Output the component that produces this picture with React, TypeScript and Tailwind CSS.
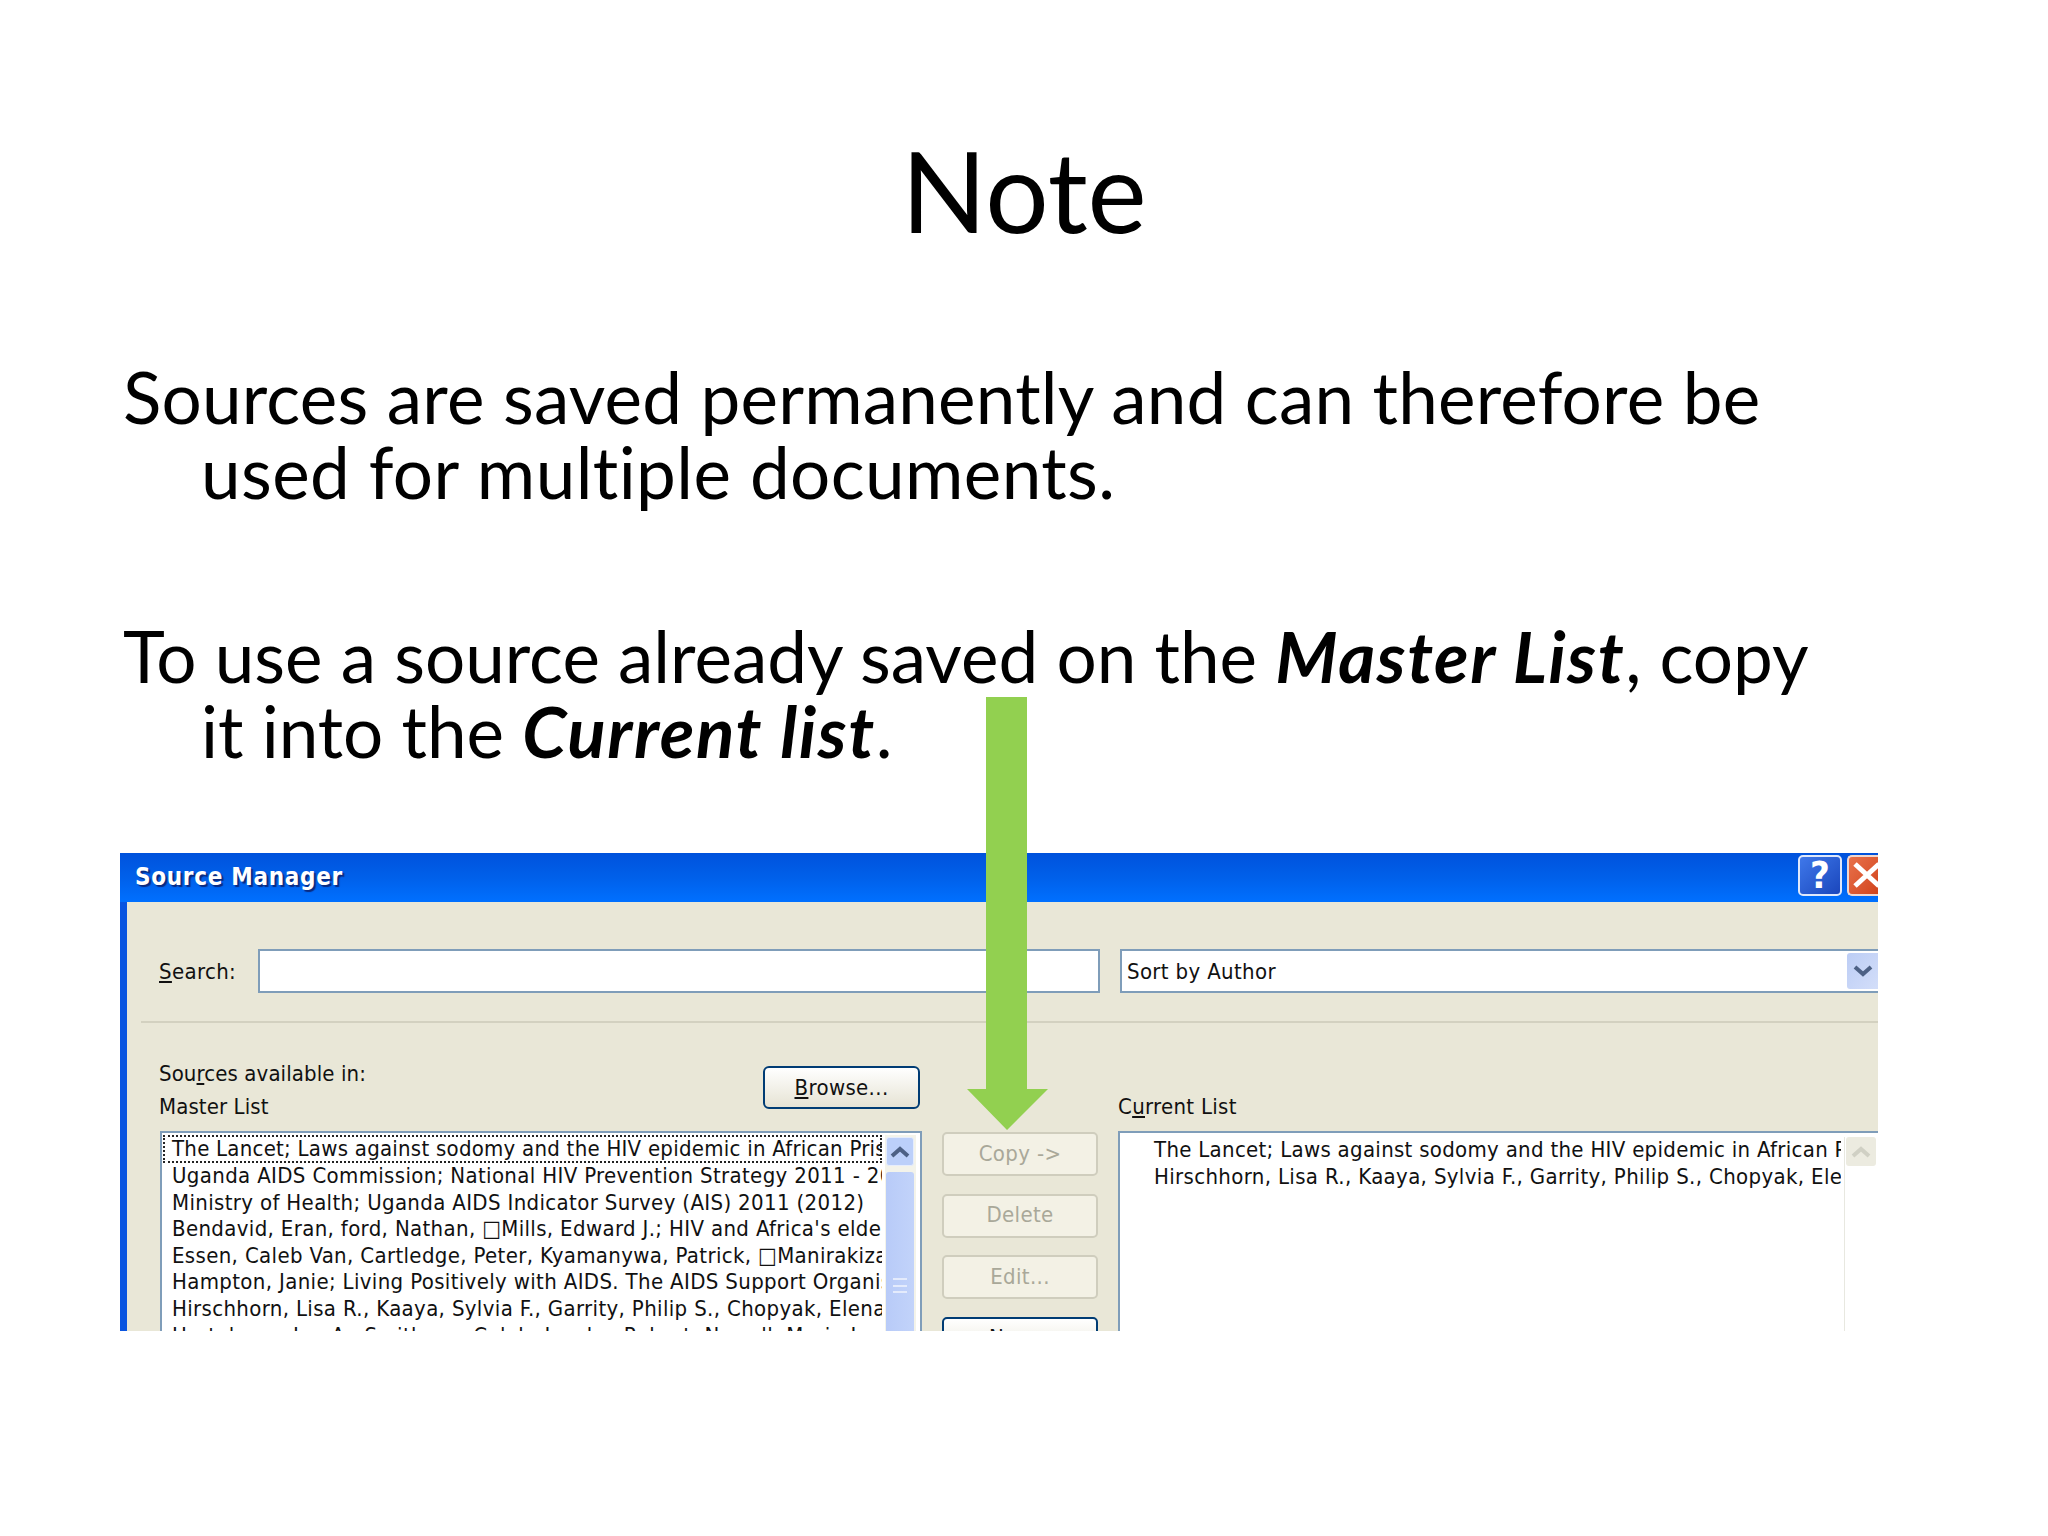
import React from 'react';

const tahoma = "[font-family:'DejaVu_Sans_Condensed','DejaVu_Sans',sans-serif] [font-stretch:condensed]";

const masterRows = [
  'Uganda AIDS Commission; National HIV Prevention Strategy 2011 - 2015',
  'Ministry of Health; Uganda AIDS Indicator Survey (AIS) 2011 (2012)',
  "Bendavid, Eran, ford, Nathan, \u25A1Mills, Edward J.; HIV and Africa's elderly",
  'Essen, Caleb Van, Cartledge, Peter, Kyamanywa, Patrick, \u25A1Manirakiza',
  'Hampton, Janie; Living Positively with AIDS. The AIDS Support Organisation',
  'Hirschhorn, Lisa R., Kaaya, Sylvia F., Garrity, Philip S., Chopyak, Elena',
  'Hartelman, Jan A., Smithson, Caleb, Jacobs, Robert, Newell, Marie-Louise',
];

const Chevron: React.FC<{ up?: boolean; color: string }> = ({ up, color }) => (
  <svg width="20" height="14" viewBox="0 0 20 14">
    <path d={up ? 'M2 11 L10 4 L18 11' : 'M2 3 L10 10 L18 3'} fill="none" stroke={color} strokeWidth="4" />
  </svg>
);

const SideButton: React.FC<{ label: string }> = ({ label }) => (
  <div className="h-[44px] rounded-[5px] border-2 border-[#cfcdbd] bg-[#f3f1e5] flex items-center justify-center text-[22px] text-[#a9a899]">
    {label}
  </div>
);

export default function App() {
  return (
    <div className="relative w-[2048px] h-[1536px] overflow-hidden bg-white text-black [font-family:Lato,sans-serif]">
      <h1 className="pt-[128px] h-[360px] text-center text-[112px] leading-[124px] font-normal">Note</h1>

      <div className="pl-[123px] w-[1900px] text-[71px] leading-[74.5px]">
        <p className="pl-[78px] -indent-[78px] tracking-[0.2px]">
          Sources are saved permanently and can therefore be<br /><span className="tracking-[0.4px]">used for multiple documents.</span>
        </p>
        <p className="mt-[110px] pl-[78px] -indent-[78px]">
          To use a source already saved on the <b className="italic tracking-[1.6px]">Master List</b>, copy<br />it into the <b className="italic tracking-[1.6px]">Current list</b>.
        </p>
      </div>

      {/* dialog screenshot, cut off at the bottom and right */}
      <div className={`absolute left-[120px] top-[853px] w-[1758px] h-[478px] overflow-hidden bg-[#e9e7d7] text-[22px] leading-[26.6px] tracking-[0.35px] text-[#111] ${tahoma}`}>
        <div className="h-[49px] flex items-center pl-[15px] pr-0 bg-gradient-to-b from-[#0052dc] via-[#0060ea] to-[#0070ff]">
          <span className="flex-1 font-bold text-[24px] tracking-[0.7px] text-white [text-shadow:2px_2px_1px_#0a2a80]">Source Manager</span>
          <div className="w-[44px] h-[41px] mb-[5px] rounded-[5px] border-2 border-[#dfe8fb] bg-gradient-to-br from-[#3f78ea] to-[#1b46bc] flex items-center justify-center text-white font-bold text-[38px]">?</div>
          <div className="ml-[5px] w-[31px] h-[41px] mb-[5px] rounded-l-[5px] border-2 border-r-0 border-[#f0d8d0] bg-gradient-to-br from-[#e8714a] to-[#d2431a] overflow-hidden flex items-center">
            <svg width="34" height="30" viewBox="0 0 34 30" className="shrink-0 ml-[2px]">
              <path d="M4 4 L28 26 M28 4 L4 26" stroke="#fff" strokeWidth="5" />
            </svg>
          </div>
        </div>

        <div className="border-l-[7px] border-[#0a55e0] h-full pl-[32px]">
          <div className="pt-[47px] flex items-center">
            <span className="w-[99px] pt-[2px]">
              <u>S</u>earch:
            </span>
            <div className="w-[842px] h-[44px] border-2 border-[#7f9db9] bg-white" />
            <div className="ml-[20px] flex-1 h-[44px] border-2 border-r-0 border-[#7f9db9] bg-white flex items-center pl-[5px]">
              <span className="flex-1 pt-[2px]">Sort by Author</span>
              <div className="w-[31px] h-[36px] rounded-l-[3px] bg-gradient-to-br from-[#bccdf5] to-[#d3def9] flex items-center justify-center">
                <Chevron color="#4d6185" />
              </div>
            </div>
          </div>

          <div className="mt-[28px] ml-[-18px] h-[2px] bg-[#d3d1c0]" />

          <div className="mt-[43px] flex">
            <div className="w-[763px]">
              <div className="flex justify-between pr-[2px]">
                <div className="-mt-[5px] h-[55px] tracking-[0.1px]">
                  <div className="h-[33px]">
                    Sou<u>r</u>ces available in:
                  </div>
                  <div>Master List</div>
                </div>
                <div className="w-[157px] h-[43px] rounded-[6px] border-2 border-[#003c74] bg-gradient-to-b from-white to-[#e6e3d4] flex items-center justify-center">
                  <span className="pt-[2px]">
                    <u>B</u>rowse...
                  </span>
                </div>
              </div>

              <div className="mt-[15px] ml-[1px] h-[210px] border-2 border-[#7f9db9] bg-white flex pl-[1px] pr-[3px] pt-[2px]">
                <div className="w-[719px] overflow-hidden whitespace-nowrap">
                  <div className="h-[28px] border-2 border-dotted border-[#222] pl-[7px] flex items-center tracking-[0.25px]">
                    The Lancet; Laws against sodomy and the HIV epidemic in African Prisons
                  </div>
                  {masterRows.map(row => (
                    <div key={row} className="pl-[9px]">
                      {row}
                    </div>
                  ))}
                </div>
                <div className="ml-[3px] w-[31px] bg-[#f3f3ea] pl-[1px] pr-[2px] pt-[2px]">
                  <div className="h-[29px] rounded-[3px] bg-[#bcd0fa] flex items-center justify-center border border-[#e6edfc]">
                    <Chevron up color="#4d6185" />
                  </div>
                  <div className="mt-[6px] h-[180px] rounded-[3px] bg-gradient-to-r from-[#b8cbf8] to-[#c2d3fa] flex justify-center pt-[106px]">
                    <div className="w-[14px] h-[15px] border-y-2 border-[#e4ebfc] flex items-center">
                      <div className="w-full h-[2px] bg-[#e4ebfc]" />
                    </div>
                  </div>
                </div>
              </div>
            </div>

            <div className="ml-[20px] w-[156px] pt-[66px] flex flex-col gap-[17.5px]">
              <SideButton label="Copy ->" />
              <SideButton label="Delete" />
              <SideButton label="Edit..." />
              <div className="h-[44px] rounded-[5px] border-2 border-[#003c74] bg-gradient-to-b from-white to-[#e6e3d4] flex items-center justify-center">New...</div>
            </div>

            <div className="ml-[20px] flex-1 min-w-0">
              <div className="pt-[28px] h-[65px] tracking-[0.3px]">
                C<u>u</u>rrent List
              </div>
              <div className="h-[210px] border-2 border-r-0 border-b-0 border-[#7f9db9] bg-white flex pt-[4px]">
                <div className="w-[721px] pl-[34px] overflow-hidden whitespace-nowrap">
                  <div className="tracking-[0.3px]">The Lancet; Laws against sodomy and the HIV epidemic in African Prisons</div>
                  <div>Hirschhorn, Lisa R., Kaaya, Sylvia F., Garrity, Philip S., Chopyak, Elena</div>
                </div>
                <div className="ml-[3px] flex-1 border-l border-[#e8e8e0] pl-[1px] pr-[2px]">
                  <div className="h-[29px] rounded-[3px] bg-[#ecebe0] flex items-center justify-center">
                    <Chevron up color="#d0d0c4" />
                  </div>
                </div>
              </div>
            </div>
          </div>
        </div>
      </div>

      {/* green arrow laid over the slide */}
      <svg className="absolute left-[960px] top-[690px]" width="96" height="446" viewBox="0 0 96 446">
        <path d="M26 7 H67 V399 H88 L47 440 L7 399 H26 Z" fill="#92d050" />
      </svg>
    </div>
  );
}
